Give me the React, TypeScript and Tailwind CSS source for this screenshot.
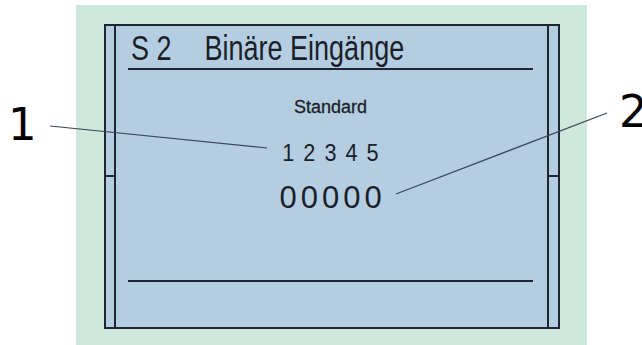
import React from "react";

export default function App() {
  const dark = "border-[#1f2632]";
  return (
    <div className="relative w-[642px] h-[345px] bg-white overflow-hidden" style={{ fontFamily: "'Liberation Sans', Arial, sans-serif" }}>
      <div className="ml-[76px] mt-[5px] w-[511px] h-[340px] bg-[#cfe8dd] pl-[28px] pt-[19px]">
        <div className={`w-[456px] h-[305px] border-2 ${dark} bg-[#b5cde0] flex`}>
          {/* left strip */}
          <div className={`w-[10px] border-r-2 ${dark} flex flex-col`}>
            <div className="mt-[149px] h-[2px] bg-[#1f2632]" />
          </div>
          {/* center */}
          <div className="flex-1 flex flex-col pl-[12px] pr-[14px]">
            <div className="h-[44px] border-b-2 border-[#1f2632]">
              <div className="mt-[10px] h-[30px] leading-[30px] text-[27px] text-[#1a1f2a] flex whitespace-nowrap scale-y-[1.3] origin-[0_24px]">
                <span className="ml-[3px]">S 2</span>
                <span className="ml-[33px]">Binäre Eingänge</span>
              </div>
            </div>
            <div className="h-[210px] flex flex-col items-center text-[#1a1f2a]">
              <div className="mt-[27px] text-[18px] leading-[20px] scale-y-[1.05] [-webkit-text-stroke:0.3px_#1a1f2a]">Standard</div>
              <div className="mt-[24px] flex gap-[10px] text-[24px] leading-[24px] scale-x-[0.9]">
                <span>1</span><span>2</span><span>3</span><span>4</span><span>5</span>
              </div>
              <div className="mt-[18px] flex gap-[4px] text-[31px] leading-[30px] font-light">
                <span>0</span><span>0</span><span>0</span><span>0</span><span>0</span>
              </div>
            </div>
            <div className="h-[2px] bg-[#1f2632]" />
          </div>
          {/* right strip */}
          <div className={`w-[11px] border-l-2 ${dark} flex flex-col`}>
            <div className="mt-[149px] h-[2px] bg-[#1f2632]" />
          </div>
        </div>
      </div>

      <svg className="absolute left-0 top-0" width="642" height="345">
        <line x1="50" y1="126" x2="267" y2="148" stroke="#3b4756" strokeWidth="1.2" />
        <line x1="396" y1="194" x2="607" y2="113" stroke="#3b4756" strokeWidth="1.2" />
      </svg>

      <span className="absolute left-[8px] top-[102px] text-[45px] leading-[45px] text-black" style={{ fontFamily: "'DejaVu Sans', sans-serif" }}>1</span>
      <span className="absolute left-[619px] top-[89px] text-[45px] leading-[45px] text-black" style={{ fontFamily: "'DejaVu Sans', sans-serif" }}>2</span>
    </div>
  );
}
